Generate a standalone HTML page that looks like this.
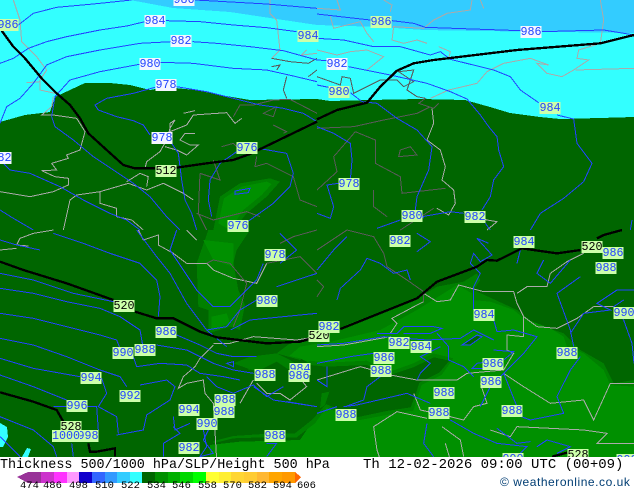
<!DOCTYPE html>
<html><head><meta charset="utf-8"><style>
html,body{margin:0;padding:0;background:#fff}
#p{position:relative;width:634px;height:490px;overflow:hidden;background:#fff}
#m{position:absolute;left:0;top:0;width:634px;height:457px;overflow:hidden;background:#006600}
svg{position:absolute;left:0;top:0}
#m b{position:absolute;font:400 11.7px/12px "Liberation Mono",monospace;color:#2244ff;background:#ccffaa;padding:0;height:12px;width:21px;text-align:center;transform:translate(-50%,-50%)}
#m b.w{background:#f4f6ff}
#m b.k{color:#000}
#m b.l{width:28px}
.u path{fill:none;stroke:#2244ff;stroke-width:3}
.g path{fill:none;stroke:#aaa;stroke-width:3}
.d path{fill:none;stroke:#5a5a5a;stroke-width:3}
.t path{fill:none;stroke:#000;stroke-width:7}
.x{position:absolute;white-space:pre;font-family:"Liberation Mono",monospace;color:#000}
#nums span{position:absolute;top:480px;font:400 10.5px/12px "Liberation Mono",monospace;color:#000}
</style></head><body><div id="p"><div id="m">
<svg width="634" height="457" viewBox="0 0 634 457" shape-rendering="crispEdges">
<rect width="634" height="125" fill="#33ffff"/>
<path fill="#33ccff" d="M130,0 L173,8 L230,12 L270,18 L317,25 L380,27 L424,30 L480,31 L560,32 L634,33 L634,0Z"/>
<path fill="#006600" d="M0,122 L25,115 L50,112 L55,97 L70,90 L85,83 L110,83 L130,85 L150,90 L165,87 L195,90 L220,95 L250,100 L317,99 L330,101 L370,100 L420,99 L465,100 L490,107 L510,113 L540,117 L560,119 L600,118 L634,117 L634,457 L0,457Z"/>
<path fill="#33ffff" d="M0,423 L7,427 L8,437 L3,447 L0,447Z M22,457 L27,448 L31,449 L28,457Z"/>
<g transform="scale(.33333)"><path fill="#008000" d="M640,690 L660,590 L720,550 L810,535 L840,545 L800,590 L740,640 L700,690Z"/><path fill="#009000" d="M655,670 L672,595 L725,560 L800,545 L815,552 L785,585 L730,630 L690,690Z"/></g>
<g transform="translate(0,230) scale(.33333)">
<path fill="#008000" d="M625,0 L590,100 L595,230 L625,240 L625,310 L690,290 L720,300 L735,225 L715,180 L700,100 L710,60 L750,0Z"/>
<path fill="#009000" d="M610,30 L700,40 L700,110 L640,90 Z M635,260 L680,250 L690,280 L635,300Z"/>
</g>
<g transform="translate(317,230) scale(.33333)">
<path fill="#008000" d="M-20,335 L100,280 L300,205 L360,170 L440,155 L480,130 L490,150 L470,180 L600,240 L650,280 L740,310 L790,360 L860,400 L890,460 L951,450 L951,700 L-20,700Z"/>
<path fill="#009000" d="M0,345 L190,300 L300,240 L420,165 L465,190 L465,210 L520,215 L590,240 L620,265 L700,295 L740,320 L750,350 L800,370 L860,420 L880,465 L951,470 L951,700 L0,700Z"/>
<path fill="#006600" d="M440,340 L480,318 L495,322 L460,345Z"/>
</g>
<g transform="translate(200,330) scale(.33333)">
<path fill="#008000" d="M230,70 L270,40 L351,32 L351,60 L300,90Z"/>
<path fill="#009000" d="M268,78 L300,50 L360,40 L360,100 L330,100 L300,85Z"/>
<path fill="#009000" d="M30,345 L30,381 L780,381 L780,240 L360,240 L300,330 L120,335Z"/>
<path fill="#008000" d="M40,340 L100,325 L190,322 L290,322 L345,280 L380,232 L470,272 L560,255 L640,242 L655,195 L665,165 L725,135 L760,85 L700,70 L640,100 L570,125 L500,92 L380,98 L330,92 L300,110 L270,90 L230,70 L150,80 L100,100 L40,120Z"/>
<path fill="#006600" d="M20,340 L45,332 L100,318 L190,312 L285,310 L338,268 L378,222 L470,262 L560,243 L632,232 L648,190 L658,158 L718,128 L748,92 L702,82 L640,112 L570,135 L500,105 L380,110 L330,105 L310,135 L260,115 L230,95 L170,125 L100,100 L0,60 L0,340Z"/>
<path fill="#008000" d="M150,82 L170,85 L165,115 L145,120Z M365,190 L388,185 L375,225 L360,235Z"/>
</g>
</svg>
<svg width="634" height="457" viewBox="0 0 634 457" shape-rendering="crispEdges">
<g transform="scale(.33333)">
<g class="g">
<path d="M40,0 L60,60 L65,125 L110,170 L140,210 L120,240 L120,270 L165,280"/><path d="M80,248 L120,245"/>
<path d="M160,290 L155,320 L125,345 L160,345 L230,355 L255,395 L240,450 L200,465 L205,475 L155,490 L170,510 L125,512 L165,530 L205,535 L205,555 L160,575 L90,590 L0,575"/>
<path d="M230,585 L300,575 L385,550 L440,570 L490,550 L550,580 L580,600"/><path d="M230,585 L210,600 L190,690"/>
<path d="M300,575 L300,610 L350,625 L350,650 L395,660 L430,690"/>
<path d="M435,505 L440,485 L480,455 L500,420 L510,385 L525,360 L510,370 L510,395 L535,385 L560,375 L580,345 L680,338 L705,370 L725,355"/>
<path d="M495,440 L530,450 L560,465 L595,435 L570,435 L540,420 L555,400 L585,400"/><path d="M550,340 L585,332"/>
<path d="M380,545 L420,520 L445,530 L440,560"/>
<path d="M810,0 L810,40 L830,60 L840,150 L815,175"/><path d="M920,150 L905,165 L951,160"/>
</g>
<g class="d">
<path d="M600,520 L595,640 L620,690"/><path d="M600,520 L660,540 L640,480"/><path d="M665,440 L700,430 L720,450"/>
<path d="M700,350 L720,315 L760,315 L820,300 L870,298 L951,340"/><path d="M790,340 L830,320 L820,350Z"/>
<path d="M820,375 L860,395 L850,400"/>
<path d="M770,470 L765,500 L800,490 L880,530 L900,600 L951,620"/><path d="M590,640 L640,660 L740,635 L780,650"/>
<path d="M815,175 L870,185 L925,190 L951,175"/><path d="M815,200 L840,195 L830,210"/><path d="M860,230 L850,270 L860,295"/><path d="M925,230 L951,210"/>
</g>
<g class="u">
<path d="M55,75 L100,40 L170,22 L280,12 L395,0"/><path d="M585,0 L640,3 L800,12 L951,25"/>
<path d="M0,190 L40,175 L85,145 L140,125 L200,110 L300,90 L380,78 L435,65"/><path d="M498,62 L600,65 L700,75 L800,83 L890,95"/>
<path d="M0,370 L20,320 L60,295 L100,250 L140,195 L200,170 L300,150 L420,130 L515,125"/><path d="M578,125 L650,130 L750,140 L850,152 L951,180"/>
<path d="M155,350 L165,290 L210,240 L300,215 L418,193"/><path d="M482,187 L580,190 L700,205 L800,210 L880,228 L951,245"/>
<path d="M465,262 L400,280 L320,295 L285,315 L295,330 L350,350 L400,362 L430,375 L450,405"/><path d="M530,260 L620,275 L700,295 L780,315 L850,325 L910,340 L951,365"/>
<path d="M155,350 L165,380 L220,420 L280,470 L340,510 L400,550 L450,590 L500,650 L540,690"/>
<path d="M0,480 L30,510 L90,520 L180,560 L250,600 L330,640 L380,660 L420,690"/><path d="M0,630 L40,655 L100,690"/>
<path d="M515,430 L535,460 L545,540 L555,600 L575,640 L590,690"/>
<path d="M710,455 L660,490 L630,540 L625,600 L635,650"/><path d="M775,445 L860,460 L880,520 L870,560 L820,610 L750,660 L710,690"/>
<path d="M705,573 L750,565 L745,578 L705,583Z"/>
</g>
<g class="t">
<path d="M5,92 L40,140 L75,175 L125,235 L170,280 L210,315 L240,355 L265,400 L320,450 L370,495 L405,505 L465,505"/>
<path d="M530,503 L620,490 L700,480 L750,462 L951,365"/>
</g>
</g>
<g transform="translate(317,0) scale(.33333)">
<g class="g">
<path d="M465,0 L460,30 L390,40 L350,60 L320,85 L230,80 L225,120 L260,130 L300,120 L330,130"/><path d="M200,0 L225,15 L220,35"/><path d="M490,0 L500,25"/>
<path d="M0,25 L70,30 L60,0"/><path d="M40,50 L50,85 L130,65 L150,100 L170,125"/><path d="M0,150 L60,165 L100,155 L150,150 L200,170 L150,210"/>
<path d="M850,0 L860,60 L850,130 L785,150 L780,175 L815,180 L770,210 L735,230 L690,220 L660,190 L695,195 L640,175 L560,190 L510,215 L480,250 L395,270 L340,295"/>
<path d="M775,210 L951,205"/><path d="M365,140 L400,155 L395,175"/>
<path d="M345,325 L350,370 L330,420 L370,450 L385,500 L375,540 L410,570 L415,610 L395,645 L360,625"/>
<path d="M440,635 L510,660 L540,665 L510,690"/>
</g>
<g class="d">
<path d="M0,230 L70,255 L75,230 L100,235 L110,280 L190,240 L240,240 L260,260 L290,245 L245,215 L290,210 L270,270 L300,290 L325,295 L305,310 L350,325 L365,310"/>
<path d="M0,385 L110,380 L200,360 L300,340 L340,320"/><path d="M115,395 L175,420 L175,490 L250,530 L255,580 L385,565"/>
<path d="M0,570 L60,515 L50,470 L115,395"/><path d="M170,570 L170,620 L210,650"/><path d="M245,470 L250,450 L280,440 L300,465Z"/><path d="M250,690 L350,625"/>
</g>
<g class="u">
<path d="M0,42 L70,50 L160,60"/><path d="M225,62 L290,70 L325,82 L610,92"/><path d="M675,95 L860,90 L951,105"/>
<path d="M0,115 L80,120 L170,140 L250,140 L340,165 L370,155 L400,178 L530,210 L580,230 L610,270 L665,308"/>
<path d="M0,180 L30,182"/><path d="M95,200 L220,225 L330,250 L400,275 L450,297 L490,345 L515,380 L540,410 L545,450 L560,500 L530,540 L520,590 L495,630"/>
<path d="M0,255 L35,262"/><path d="M100,278 L135,305 L180,310 L240,355 L300,390 L345,440 L335,510 L300,590 L295,630 L320,655"/>
<path d="M720,345 L770,357 L780,430 L825,490 L800,545 L740,595 L670,640 L640,690"/>
<path d="M315,650 L400,635 L440,640"/><path d="M505,670 L520,690"/><path d="M180,685 L250,660"/>
<path d="M0,380 L50,400 L100,430 L105,480 L100,540"/><path d="M65,550 L30,555 L50,620 L40,655 L0,640"/><path d="M945,660 L940,690"/>
</g>
<path fill="none" stroke="#000" stroke-width="7" d="M0,358 L60,330 L150,308 L190,260 L240,212 L290,190 L350,180 L600,150 L850,130 L951,105"/>
</g>
<g transform="translate(0,230) scale(.33333)">
<g class="g">
<path d="M160,0 L100,10 L60,25 L50,45 L85,48"/><path d="M0,60 L50,55"/>
<path d="M415,0 L430,30 L475,15 L475,45 L520,70 L560,100 L620,100 L640,120 L700,145 L770,160 L800,100"/><path d="M590,30 L560,0"/>
<path d="M640,345 L600,385 L585,410 L550,440 L535,475 L560,460 L610,450 L615,490 L640,520 L650,690"/>
<path d="M640,340 L690,340 L760,320 L890,330 L951,320"/><path d="M760,450 L720,520"/>
<path d="M770,460 L800,490 L840,490 L870,510 L920,470 L880,420"/>
</g>
<g class="d"><path d="M620,100 L640,90 L690,100 L740,160 L720,240 L700,290"/><path d="M800,100 L900,80 L951,130"/><path d="M840,40 L880,20 L951,0"/></g>
<g class="u">
<path d="M160,10 L250,40 L330,70 L420,100 L470,150 L480,200 L475,260"/>
<path d="M0,30 L50,45 L120,60"/><path d="M0,130 L100,150 L220,190 L340,215"/>
<path d="M0,175 L100,190 L200,215 L300,235 L360,260 L420,300 L428,345"/>
<path d="M0,250 L100,265 L200,290 L300,315 L350,330 L360,355"/>
<path d="M0,325 L100,345 L200,380 L300,420 L360,440 L380,470"/>
<path d="M0,385 L100,415 L240,440"/><path d="M0,435 L100,470 L200,510"/>
<path d="M400,380 L410,410 L480,400 L560,405 L600,430 L670,440 L720,450"/>
<path d="M410,0 L470,80 L510,130 L560,220 L620,300 L680,350"/>
<path d="M530,0 L510,60 L590,180 L640,230 L690,230 L770,150 L790,100"/>
<path d="M470,345 L560,360 L640,400 L700,420 L760,430"/><path d="M530,315 L600,345 L650,370 L700,380 L770,380"/>
<path d="M305,445 L320,490 L295,530 L350,560 L355,610"/><path d="M420,465 L500,450 L525,470 L510,510 L440,555 L430,600 L350,615"/>
<path d="M692,300 L750,270 L850,260 L951,250"/><path d="M830,170 L951,130"/><path d="M620,300 L680,290 L720,240 L770,210"/>
<path d="M160,530 L290,530 L295,600"/><path d="M0,560 L100,600 L160,650 L170,680"/><path d="M0,620 L60,680"/><path d="M215,640 L220,680"/>
<path d="M490,680 L490,640 L540,610 L520,590"/><path d="M610,600 L620,650 L600,680 L640,670 L610,630 L625,600"/><path d="M520,560 L525,600 L570,580"/>
<path d="M800,640 L830,640 L800,680"/><path d="M840,10 L890,60 L840,100"/><path d="M620,440 L650,470 L700,490 L760,465 L800,500 L850,470"/>
<path d="M680,400 L700,395 L700,410Z"/><path d="M760,470 L820,510 L951,530"/><path d="M860,515 L951,530"/>
</g>
<g class="t">
<path d="M0,95 L70,120 L200,160 L340,210"/><path d="M405,245 L470,265 L520,265 L600,305 L650,322 L800,340 L900,335 L951,320"/>
<path d="M0,487 L100,515 L170,540 L190,575"/><path d="M265,640 L270,665 L290,665 L345,655 L345,680"/>
</g>
</g>
<g transform="translate(317,230) scale(.33333)">
<g class="g">
<path d="M320,190 L360,215 L400,210 L425,165 L500,185 L590,185 L600,220 L620,260 L660,290 L720,295 L780,265 L830,230 L890,230"/>
<path d="M600,190 L630,170 L690,170 L700,130 L750,95 L800,70"/>
<path d="M620,260 L620,320 L570,315 L570,360 L590,370 L560,420 L450,430 L420,450 L300,450 L220,435 L130,410 L0,450"/>
<path d="M560,430 L620,470 L700,520 L800,510 L830,570 L880,460 L951,460"/>
<path d="M290,490 L310,540 L400,560 L440,570 L470,530 L510,520 L490,460"/>
<path d="M170,590 L240,545 L330,565"/><path d="M170,590 L180,660 L190,690"/>
<path d="M520,600 L580,620 L600,590 L800,600 L870,610 L840,640 L951,640"/>
<path d="M220,310 L240,280 L225,265 L300,225 L320,215"/><path d="M0,350 L80,345 L220,320"/>
<path d="M375,590 L430,630 L440,680"/><path d="M385,640 L400,690"/>
</g>
<g class="d">
<path d="M90,0 L170,20 L200,70 L210,110 L270,150 L320,185 L320,215"/><path d="M0,200 L20,170 L0,150"/><path d="M0,60 L90,0"/>
</g>
<g class="u">
<path d="M0,120 L50,60 L90,20"/><path d="M60,210 L70,175 L130,120 L150,85 L190,100 L230,130 L270,120 L280,150"/>
<path d="M300,10 L340,35 L300,65"/><path d="M515,40 L480,25 L525,75 L490,95 L470,70 L460,100 L490,130 L470,170 L470,240"/>
<path d="M610,60 L600,100"/><path d="M680,90 L660,130 L700,160 L760,90"/>
<path d="M530,270 L540,305 L590,300 L660,320 L620,370 L560,430 L520,470 L500,510 L490,530"/>
<path d="M180,310 L240,310 L260,290 L350,290 L375,295 L340,310 L260,310"/>
<path d="M0,345 L80,340 L200,320 L330,330 L430,325 L470,300 L530,330"/><path d="M435,345 L480,315 L495,320 L460,345Z"/>
<path d="M360,310 L395,350 L395,390 L440,410 L470,440"/><path d="M0,400 L100,380 L170,370"/>
<path d="M530,360 L590,365 L560,390 L480,400 L465,415 L500,415"/>
<path d="M790,140 L720,190 L760,300 L770,350"/><path d="M790,380 L760,420 L720,500 L740,550 L640,570 L560,540"/><path d="M560,430 L600,530"/>
<path d="M951,180 L900,180 L840,220 L880,240 L800,250 L760,310"/><path d="M920,210 L890,230 L920,270 L945,340 L951,400"/>
<path d="M30,410 L30,470 L0,450"/><path d="M85,530 L140,510 L150,470 L190,440"/><path d="M80,530 L120,525 L270,490 L340,520"/><path d="M0,550 L60,530"/>
<path d="M300,450 L310,430 L340,400 L310,380 L370,350"/><path d="M330,580 L320,640 L350,680"/><path d="M400,570 L470,610 L540,640 L630,650 L600,680"/>
<path d="M660,650 L690,630 L760,650 L720,670"/><path d="M540,595 L600,640 L640,635"/>
</g>
<g class="t">
<path d="M70,297 L150,265 L300,205 L360,155 L480,110 L510,90 L540,92 L615,55 L720,70 L790,60"/><path d="M840,25 L860,15 L915,0"/><path d="M705,680 L750,668"/>
</g>
</g>
</svg>
<b class="w" style="left:184px;top:0">986</b><b style="left:8px;top:25px">986</b><b class="w" style="left:155px;top:21px">984</b><b class="w" style="left:181px;top:41px">982</b><b class="w" style="left:150px;top:64px">980</b><b class="w" style="left:166px;top:85px">978</b><b class="w" style="left:162px;top:138px">978</b><b style="left:247px;top:148px">976</b><b class="k" style="left:166px;top:171px">512</b><b class="w" style="left:1px;top:158px">982</b><b style="left:238px;top:226px">976</b><b style="left:308px;top:36px">984</b><b style="left:381px;top:22px">986</b><b class="w" style="left:531px;top:32px">986</b><b class="w" style="left:337px;top:64px">982</b><b style="left:339px;top:92px">980</b><b style="left:550px;top:108px">984</b><b style="left:349px;top:184px">978</b><b style="left:412px;top:216px">980</b><b style="left:475px;top:217px">982</b><b style="left:275px;top:255px">978</b><b style="left:267px;top:301px">980</b><b class="k" style="left:124px;top:306px">520</b><b style="left:166px;top:332px">986</b><b style="left:123px;top:353px">990</b><b style="left:145px;top:350px">988</b><b style="left:91px;top:378px">994</b><b style="left:130px;top:396px">992</b><b style="left:77px;top:406px">996</b><b class="k" style="left:71px;top:427px">528</b><b style="left:88px;top:436px">998</b><b class="l" style="left:66px;top:436px">1000</b><b style="left:265px;top:375px">988</b><b style="left:300px;top:369px">984</b><b style="left:299px;top:376px">986</b><b style="left:225px;top:400px">988</b><b style="left:224px;top:412px">988</b><b style="left:189px;top:410px">994</b><b style="left:207px;top:424px">990</b><b style="left:189px;top:448px">982</b><b style="left:275px;top:436px">988</b><b class="k" style="left:319px;top:336px">520</b><b style="left:400px;top:241px">982</b><b style="left:524px;top:242px">984</b><b class="k" style="left:592px;top:247px">520</b><b style="left:613px;top:253px">986</b><b style="left:606px;top:268px">988</b><b style="left:624px;top:313px">990</b><b style="left:329px;top:327px">982</b><b style="left:484px;top:315px">984</b><b style="left:399px;top:343px">982</b><b style="left:421px;top:347px">984</b><b style="left:384px;top:358px">986</b><b style="left:381px;top:371px">988</b><b style="left:493px;top:364px">986</b><b style="left:491px;top:382px">986</b><b style="left:444px;top:393px">988</b><b style="left:439px;top:413px">988</b><b style="left:346px;top:415px">988</b><b style="left:512px;top:411px">988</b><b style="left:567px;top:353px">988</b><b style="left:513px;top:459px">990</b><b class="k" style="left:578px;top:455px">528</b><b style="left:627px;top:460px">990</b>
</div>
<div class="x" style="left:0;top:457px;font-size:13.42px;line-height:17px">Thickness 500/1000 hPa/SLP/Height 500 hPa</div>
<div class="x" style="left:363px;top:457px;font-size:14px;line-height:17px">Th 12-02-2026 09:00 UTC (00+09)</div>
<div class="x" style="left:500px;top:475px;line-height:14px;color:#003d73;font-family:'Liberation Sans',sans-serif;letter-spacing:.55px;font-size:12px">© weatheronline.co.uk</div>
<svg width="634" height="490" viewBox="0 0 634 490" style="pointer-events:none" shape-rendering="crispEdges">
<path fill="#993399" d="M17,477 L28,472 L28,483 Z"/>
<rect x="28" y="472" width="13" height="11" fill="#993399"/><rect x="41" y="472" width="13" height="11" fill="#cc33cc"/><rect x="54" y="472" width="13" height="11" fill="#ff33ff"/><rect x="67" y="472" width="12" height="11" fill="#ff99ff"/><rect x="79" y="472" width="13" height="11" fill="#1100cc"/><rect x="92" y="472" width="13" height="11" fill="#3366ff"/><rect x="105" y="472" width="12" height="11" fill="#3399ff"/><rect x="117" y="472" width="13" height="11" fill="#33ccff"/><rect x="130" y="472" width="12" height="11" fill="#33ffff"/><rect x="142" y="472" width="13" height="11" fill="#006600"/><rect x="155" y="472" width="13" height="11" fill="#009000"/><rect x="168" y="472" width="12" height="11" fill="#00b000"/><rect x="180" y="472" width="13" height="11" fill="#00d800"/><rect x="193" y="472" width="13" height="11" fill="#00ff00"/><rect x="206" y="472" width="13" height="11" fill="#ffff33"/><rect x="219" y="472" width="12" height="11" fill="#ffee33"/><rect x="231" y="472" width="13" height="11" fill="#ffd633"/><rect x="244" y="472" width="13" height="11" fill="#ffcc33"/><rect x="257" y="472" width="12" height="11" fill="#ffb833"/><rect x="269" y="472" width="13" height="11" fill="#ffa500"/><rect x="282" y="472" width="13" height="11" fill="#ff9900"/>
<path fill="#ff6600" d="M295,472 L301,477 L295,483 Z"/>
</svg>
<div id="nums"><span style="left:20px">474</span><span style="left:43px">486</span><span style="left:69px">498</span><span style="left:95px">510</span><span style="left:121px">522</span><span style="left:147px">534</span><span style="left:172px">546</span><span style="left:198px">558</span><span style="left:223px">570</span><span style="left:248px">582</span><span style="left:273px">594</span><span style="left:297px">606</span></div>
</div></body></html>
